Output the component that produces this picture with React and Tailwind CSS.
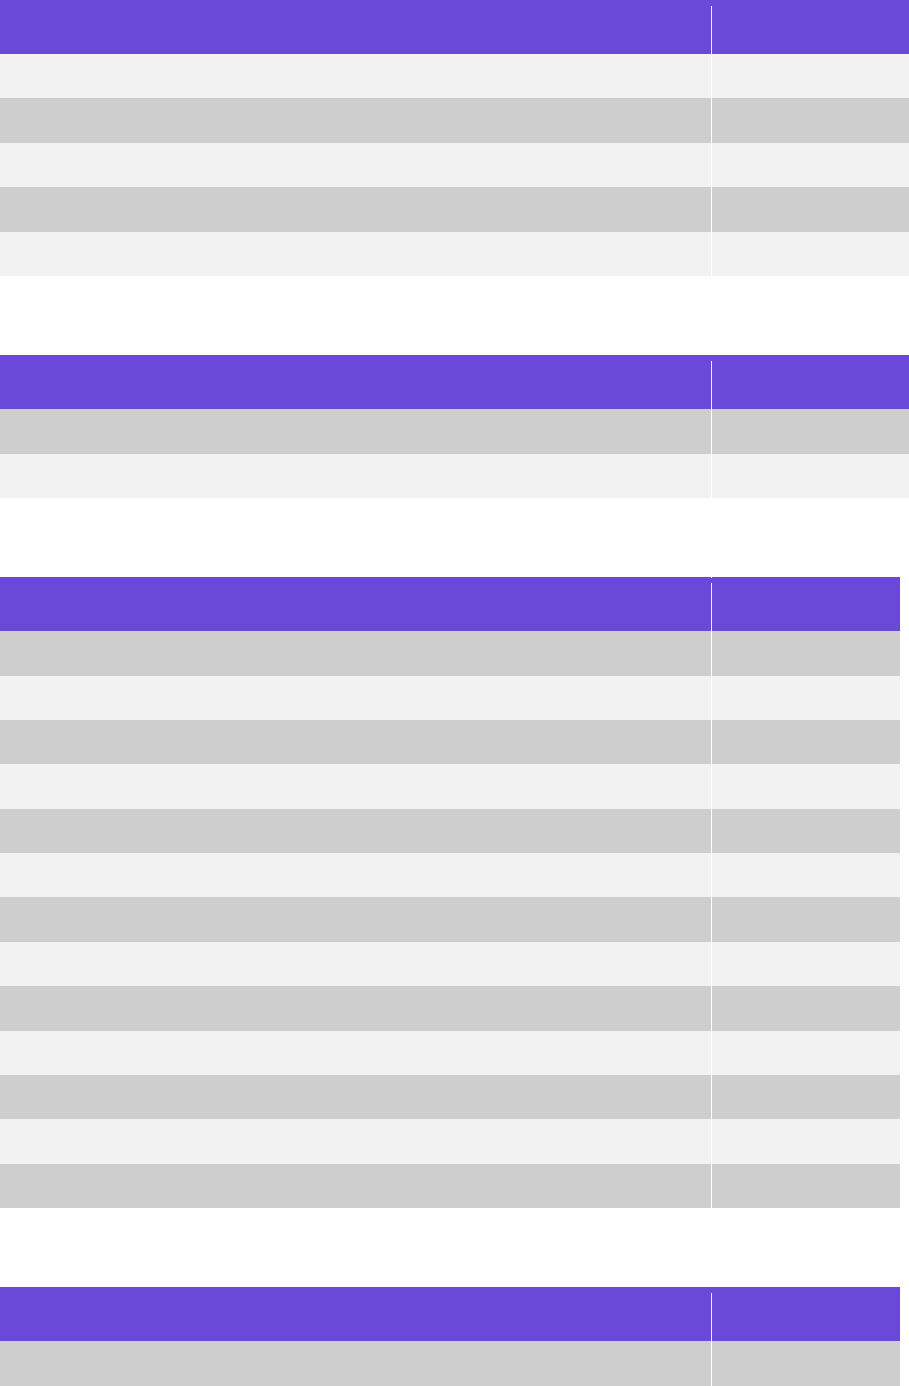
import React from "react";

function Table({ rows, firstDark, narrow, topMark }) {
  return (
    <div className={narrow ? "w-[900px]" : "w-full"}>
      <div className="relative flex h-[54px] bg-[#6a49d9]">
        <div className="w-[711px] shrink-0" />
        <div className="flex-1 pt-[6px]">
          <div className="h-full border-l border-white" />
        </div>
        {topMark && <div className="absolute left-[711px] top-0 h-px w-px bg-white" />}
      </div>
      {Array.from({ length: rows }).map((_, i) => {
        const dark = firstDark ? i % 2 === 0 : i % 2 === 1;
        return (
          <div
            key={i}
            className={`flex h-[44.4px] ${dark ? "bg-[#cecece]" : "bg-[#f2f2f2]"}`}
          >
            <div className="w-[711px] shrink-0" />
            <div className="flex-1 border-l border-white" />
          </div>
        );
      })}
    </div>
  );
}

export default function App() {
  return (
    <div className="flex h-[1386px] w-[909px] flex-col gap-[79.2px] overflow-hidden bg-white font-['Liberation_Sans',sans-serif]">
      <Table rows={5} firstDark={false} />
      <Table rows={2} firstDark={true} />
      <Table rows={13} firstDark={true} narrow topMark />
      <Table rows={1} firstDark={true} narrow />
    </div>
  );
}
